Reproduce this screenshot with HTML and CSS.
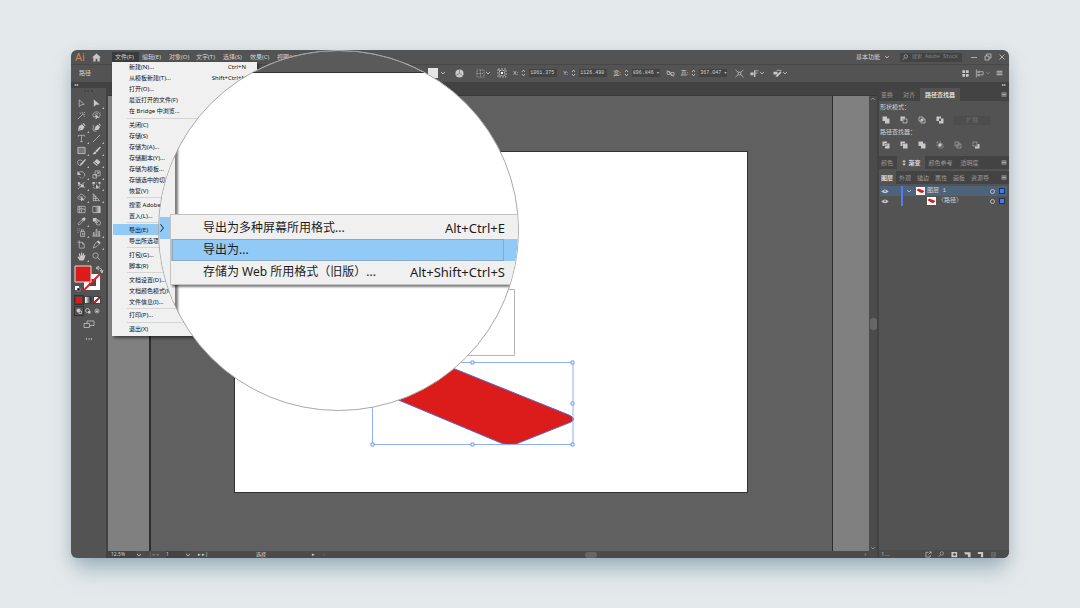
FILE: index.html
```html
<!DOCTYPE html>
<html lang="zh-CN">
<head>
<meta charset="utf-8">
<title>导出为</title>
<link rel="stylesheet" href="styles.css">
</head>
<body>
<svg class="defs" aria-hidden="true">
  <symbol id="chev" viewBox="0 0 10 10"><path class="ln" d="M2 3.5l3 3 3-3"/></symbol>
  <symbol id="step" viewBox="0 0 10 16"><path class="ln" d="M2 6l3-4 3 4M2 10l3 4 3-4"/></symbol>
  <symbol id="lines" viewBox="0 0 12 10"><path class="ln" d="M1 2h10M1 5h10M1 8h10"/></symbol>
  <symbol id="eye" viewBox="0 0 20 12"><path class="fl" d="M1 6q9-10 18 0q-9 9-18 0z"/><circle cx="10" cy="5" r="2" fill="#444"/></symbol>
  <symbol id="find" viewBox="0 0 20 20"><circle class="ln" cx="11" cy="7" r="5"/><path class="ln" d="M7 11l-5 6"/></symbol>
  <symbol id="art" viewBox="0 0 18 16"><path fill="#fff" d="M0 0h18v16H0z"/><path fill="#dc1c1a" d="M1 6l4-3 12 5-4 4-5-1z"/></symbol>
</svg>
<main class="window">
  <header class="menubar">
    <span class="logo">Ai</span>
    <button class="home" aria-label="主页"><svg viewBox="0 0 20 18"><path class="fl" d="M10 0L0 9h3v9h5v-6h4v6h5V9h3z"/></svg></button>
    <nav class="menus">
      <button class="open">文件(F)</button><button>编辑(E)</button><button>对象(O)</button><button>文字(T)</button><button>选择(S)</button><button>效果(C)</button><button>视图(V)</button>
    </nav>
    <button class="workspace">基本功能 <svg><use href="#chev"/></svg></button>
    <label class="search"><svg><use href="#find"/></svg><input aria-label="搜索" placeholder="搜索 Adobe Stock"></label>
    <div class="winbtns">
      <button aria-label="最小化"><svg viewBox="0 0 16 16"><path class="ln" d="M2 9h12"/></svg></button>
      <button aria-label="还原"><svg viewBox="0 0 16 16"><path class="ln" d="M2 6h8v8H2zM5 6V2h9v8h-4"/></svg></button>
      <button aria-label="关闭"><svg viewBox="0 0 16 16"><path class="ln" d="M3 3l10 10M13 3L3 13"/></svg></button>
    </div>
  </header>

  <section class="control">
    <span class="kind">路径</span>
    <button class="fill" aria-label="填色"></button><svg class="s"><use href="#chev"/></svg>
    <svg class="m globe" viewBox="0 0 20 20"><circle class="fl" cx="10" cy="10" r="9"/><path d="M10 1v9l7 5M10 10l-8 4" stroke="#888" stroke-width="2" fill="none"/></svg>
    <svg class="m" viewBox="0 0 20 20"><path class="ln" stroke-dasharray="2 2" d="M2 2h16v16H2zM2 10h16M10 2v16"/></svg><svg class="s near"><use href="#chev"/></svg>
    <svg class="m ref" viewBox="0 0 20 20"><path class="ln" stroke-dasharray="4 2" d="M2 2h16v16H2zM5 5h10v10H5z"/><path fill="#fff" d="M8 8h4v4H8z"/></svg>
    <label class="num">X:<svg><use href="#step"/></svg><input value="1061.375"></label>
    <label class="num">Y:<svg><use href="#step"/></svg><input value="1126.490"></label>
    <label class="num">宽:<svg><use href="#step"/></svg><input value="896.846 ▸"></label>
    <svg class="m" viewBox="0 0 20 20"><path class="ln" d="M2 6h7v6H3zM11 8h7v6h-7zM3 3l14 14"/></svg>
    <label class="num">高:<svg><use href="#step"/></svg><input value="367.047 ▸"></label>
    <svg class="m gap" viewBox="0 0 20 20"><path class="ln" d="M1 2l6 5M19 2l-6 5M1 18l6-5M19 18l-6-5M7 7h6v6H7z"/></svg>
    <svg class="m" viewBox="0 0 20 20"><path class="fl" d="M1 8h7v6H1zM9 3h3v15H9z"/><path class="ln" d="M12 4h7M12 9h5"/></svg><svg class="s near"><use href="#chev"/></svg>
    <svg class="m gap" viewBox="0 0 20 20"><path class="fl" d="M1 6h9v6H1zM5 17L16 5l3 3-9 9z"/><path class="ln" d="M8 3h11"/></svg><svg class="s near"><use href="#chev"/></svg>
    <div class="right">
      <svg class="m" viewBox="0 0 20 20"><path class="fl" d="M3 3h6v6H3zM11 3h6v6h-6zM3 11h6v6H3zM11 11h6v6h-6z"/></svg>
      <svg class="m" viewBox="0 0 20 20"><path class="ln" d="M3 1v18M6 5h4v3H6zM6 12h4v3H6zM11 6h7v7h-7"/></svg>
      <svg class="s dim"><use href="#chev"/></svg>
      <svg class="list"><use href="#lines"/></svg>
    </div>
  </section>

  <div class="main">
    <aside class="tools">
      <div class="collapse">◂◂</div>
      <div class="grip"></div>
      <div class="toolgrid">
        <button aria-label="选择"><svg viewBox="0 0 20 20"><path class="ln" d="M5 2v15l4-4 7-1z"/></svg></button>
        <button class="more" aria-label="直接选择"><svg viewBox="0 0 20 20"><path class="fl" d="M4 1v17l5-5 8-1z"/></svg></button>
        <button aria-label="魔棒"><svg viewBox="0 0 20 20"><path class="ln" d="M2 18L13 7M12 2v4M18 8h-4M6 4l3 2M17 13l-3-3M18 2l-3 3"/></svg></button>
        <button aria-label="套索"><svg viewBox="0 0 20 20"><path class="ln" d="M5 15C-1 9 3 2 10 2s11 6 6 11M6 8q4-4 8-1M5 12h4"/><path class="fl" d="M8 7v12l4-4h5z"/></svg></button>
        <button class="more" aria-label="钢笔"><svg viewBox="0 0 20 20"><path class="fl" d="M2 18l2-11 7-4 6 6-4 6zM12 1l2-1 5 5-1 2z"/><path d="M3 17l6-6" stroke="#555"/></svg></button>
        <button aria-label="曲率"><svg viewBox="0 0 20 20"><path class="fl" d="M5 16l3-9 5-3 5 5-4 6zM14 2l2-1 4 4-2 1z"/><path class="ln" d="M2 4q3 5 0 9q-1 6 8 5"/></svg></button>
        <button class="more" aria-label="文字"><svg viewBox="0 0 20 20"><path class="ln" d="M3 6V3h14v3M10 3v14M7 17h6"/></svg></button>
        <button class="more" aria-label="直线段"><svg viewBox="0 0 20 20"><path class="ln" d="M2 18L18 2"/></svg></button>
        <button class="more" aria-label="矩形"><svg viewBox="0 0 20 20"><path fill="#777" stroke="#bbb" stroke-width="2" d="M2 3h16v14H2z"/></svg></button>
        <button class="more" aria-label="画笔"><svg viewBox="0 0 20 20"><path class="fl" d="M18 1l2 2-9 11-4-3zM6 12l4 3c-2 4-6 4-9 3 3-1 2-4 5-6z"/></svg></button>
        <button class="more" aria-label="斑点画笔"><svg viewBox="0 0 20 20"><path class="ln" d="M12 7C6 1-1 7 2 13s9 4 8-1"/><path class="fl" d="M18 2l2 2-9 11-5 2 2-5z"/></svg></button>
        <button class="more" aria-label="橡皮擦"><svg viewBox="0 0 20 20"><path class="fl" d="M11 2l8 7-8 9-9-8z"/><path d="M5 8l8 7" stroke="#555" stroke-width="2"/></svg></button>
        <button class="more" aria-label="旋转"><svg viewBox="0 0 20 20"><path class="ln" d="M3 7c6-8 17-1 14 7"/><path class="ln" stroke-dasharray="2 2" d="M16 15q-6 6-12-1"/><path class="fl" d="M1 2v9h8z"/></svg></button>
        <button class="more" aria-label="比例缩放"><svg viewBox="0 0 20 20"><path class="ln" d="M7 2h11v11H7zM2 10h8v8H2zM9 11l6-6M11 5h4v4"/></svg></button>
        <button class="more" aria-label="宽度"><svg viewBox="0 0 20 20"><path class="ln" d="M2 4q7 9 15-2M2 18q7-10 16-3M2 9l9 4"/><path class="fl" d="M2 3h5v5H2zM9 8h6v6H9z"/></svg></button>
        <button class="more" aria-label="自由变换"><svg viewBox="0 0 20 20"><path class="ln" stroke-dasharray="3 2" d="M3 4h14v12H3z"/><path class="fl" d="M1 2h5v5H1zM9 7v11l3-3h5zM15 2h4v4h-4z"/></svg></button>
        <button class="more" aria-label="形状生成器"><svg viewBox="0 0 20 20"><path class="ln" d="M10 14c-9 2-11-7-4-8 1-6 9-3 9 1 5 0 4 5 1 6M5 9h8"/><path class="fl" d="M9 8v11l3-3h5z"/></svg></button>
        <button class="more" aria-label="透视网格"><svg viewBox="0 0 20 20"><path class="ln" d="M3 1v17M3 2l14 15H3M3 7h5M3 12h9M8 7v10"/></svg></button>
        <button aria-label="网格"><svg viewBox="0 0 20 20"><path class="ln" d="M2 3h16v14H2zM2 10q8-4 16 0M9 3q4 7 0 14M5 3q3 7 0 14"/></svg></button>
        <button aria-label="渐变"><svg viewBox="0 0 20 20"><path fill="url(#grad)" stroke="#bbb" stroke-width="2" d="M2 3h16v14H2z"/><linearGradient id="grad"><stop stop-color="#222"/><stop offset="1" stop-color="#ddd"/></linearGradient></svg></button>
        <button class="more" aria-label="吸管"><svg viewBox="0 0 20 20"><path class="ln" d="M3 17v-3l8-8 3 3-8 8z"/><path class="fl" d="M10 4l6 6 1-3 2-2q1-5-4-4l-2 2z"/></svg></button>
        <button aria-label="混合"><svg viewBox="0 0 20 20"><path class="fl" d="M2 2h8v8H2z"/><circle class="ln" cx="14" cy="13" r="5"/><circle class="ln" cx="10" cy="9" r="4"/></svg></button>
        <button class="more" aria-label="符号喷枪"><svg viewBox="0 0 20 20"><path class="ln" d="M8 8h9v11H8zM10 8V4h4v4M11 12h3v3h-3"/><path class="ln" stroke-dasharray="2 2" d="M1 2h8M1 6h5M1 10h4"/></svg></button>
        <button class="more" aria-label="柱形图"><svg viewBox="0 0 20 20"><path class="ln" d="M1 18h18M3 18v-8h2v8M9 18V3h2v15M15 18V7h2v11"/></svg></button>
        <button aria-label="画板"><svg viewBox="0 0 20 20"><path class="ln" d="M5 1v16M1 5h11l4 4v9H5M12 5v4h4"/></svg></button>
        <button class="more" aria-label="切片"><svg viewBox="0 0 20 20"><path class="ln" d="M3 18L6 9l7-7 5 5-7 7z"/><path class="fl" d="M11 4l5 5 3-3-5-5z"/></svg></button>
        <button class="more" aria-label="抓手"><svg viewBox="0 0 20 20"><path class="fl" d="M6 19L1 11l2-1 3 3-2-9 2-1 3 7V1h2l1 8 2-7h2l-1 8 2-4 2 1-3 9-2 3z"/></svg></button>
        <button aria-label="缩放"><svg viewBox="0 0 20 20"><circle class="ln" cx="8" cy="8" r="6"/><path class="ln" d="M12 12l6 6"/></svg></button>
      </div>
      <svg class="swatches" viewBox="0 0 35 28">
        <path d="M13 9h16v16H13z" fill="#fff"/><path d="M18 14h7v7h-7z" fill="#4b4b4b"/><path d="M13 25L29 9" stroke="#e02020" stroke-width="2"/>
        <path d="M4 1h16v16H4z" fill="#dc1c1a" stroke="#ddd"/>
        <path class="ln thin" d="M26 3q5-1 5 4M28 1l-3 2 3 2M29 5l2 3 1-3"/>
        <path d="M4 21h4v4H4z" fill="#fff"/><path d="M6 23h3v3H6z" fill="#111" stroke="#ddd" stroke-width=".5"/>
      </svg>
      <div class="modes"><i class="red on"></i><i class="grad"></i><i class="none"></i></div>
      <div class="modes draw">
        <svg class="on" viewBox="0 0 16 16"><circle class="fl" cx="7" cy="7" r="4"/><path class="ln" d="M8 8h5v5H8z"/></svg>
        <svg viewBox="0 0 16 16"><circle class="ln" cx="7" cy="7" r="4"/><path class="fl" d="M8 8h5v5H8z"/></svg>
        <svg viewBox="0 0 16 16"><circle class="ln" cx="8" cy="8" r="4"/><path class="fl" d="M6 7h4v3H6z"/></svg>
      </div>
      <svg class="screen" viewBox="0 0 24 18"><path class="ln" d="M8 2h14v9H8z"/><path class="ln front" d="M2 7h11v8H2z"/></svg>
      <svg class="dots" viewBox="0 0 16 4"><circle class="fl" cx="3" cy="2" r="1.500"/><circle class="fl" cx="8" cy="2" r="1.500"/><circle class="fl" cx="13" cy="2" r="1.500"/></svg>
    </aside>

    <section class="work">
      <div class="tabstrip"></div>
      <div class="canvas">
        <div class="artboard">
          <svg viewBox="0 0 512 340">
            <path d="M160 137.500h119.500V203.500H160z" fill="#fff" stroke="#b5b5b5"/>
            <path d="M142 239L210 213L334 263Q342 267 336 270L281 292Q274 294 266 291Z" fill="#dc1c1a" stroke="#5864d8"/>
            <path d="M137.500 210.500h200.500v82H137.500z" fill="none" stroke="#8fb0f5"/>
            <path d="M136 209h3v3h-3zM236 209h3v3h-3zM336 209h3v3h-3zM336 250h3v3h-3zM136 291h3v3h-3zM236 291h3v3h-3zM336 291h3v3h-3z" fill="#fff" stroke="#7598ee"/>
          </svg>
        </div>
      </div>
      <div class="vscroll"><svg><use href="#chev"/></svg><i></i><svg><use href="#chev"/></svg></div>
      <footer class="status">
        <span class="zoom">12.5%</span><svg><use href="#chev"/></svg><span class="dim">|◂ ◂</span><span class="page">1</span><svg><use href="#chev"/></svg><span class="nav">▸ ▸|</span><span class="mode">选择</span><span class="play">▸</span><span class="dim">‹</span><i class="thumb"></i><span class="end">›</span>
      </footer>
    </section>

    <aside class="panels">
      <div class="collapse">▸▸</div>
      <div class="tabs first"><button>变换</button><button>对齐</button><button class="on">路径查找器</button><svg><use href="#lines"/></svg></div>
      <div class="finder">
        <p>形状模式：</p>
        <div class="ops">
          <svg viewBox="0 0 16 16"><path class="fl" d="M1 1h9v4h5v10H6v-5H1z"/></svg>
          <svg viewBox="0 0 16 16"><path class="fl" d="M1 1h9v4H5v5H1z"/><path class="ln" d="M6 6h8v8H6z"/></svg>
          <svg viewBox="0 0 16 16"><path class="ln" d="M2 2h8v8H2zM6 6h8v8H6z"/><path class="fl" d="M6 6h4v4H6z"/></svg>
          <svg viewBox="0 0 16 16"><path class="fl" fill-rule="evenodd" d="M1 1h9v4h5v10H6v-5H1zM6 5h4v5H6z"/></svg>
          <button class="expand" disabled>扩展</button>
        </div>
        <p>路径查找器：</p>
        <div class="ops">
          <svg viewBox="0 0 16 16"><path class="fl" d="M1 1h9v4h5v10H6v-5H1z"/><path d="M5 10V5h5v5z" fill="none" stroke="#555"/></svg>
          <svg viewBox="0 0 16 16"><path class="fl" d="M1 1h9v4h5v10H6v-5H1z"/><path d="M5 10V5h5" fill="none" stroke="#555"/></svg>
          <svg viewBox="0 0 16 16"><path class="fl" d="M1 1h9v4h5v10H6v-5H1z"/></svg>
          <svg viewBox="0 0 16 16"><path class="ln thin" stroke-dasharray="2 1" d="M2 2h8v8H2zM6 6h8v8H6z"/><path class="fl" d="M5 5h6v6H5z"/></svg>
          <svg viewBox="0 0 16 16"><path class="ln thin" d="M2 2h8v8H2zM6 6h8v8H6z"/></svg>
          <svg viewBox="0 0 16 16"><path class="fl" d="M11 6h4v9H6v-4h5z"/><path class="ln thin" d="M2 2h8v8H2z"/></svg>
        </div>
      </div>
      <div class="tabs second"><button>颜色</button><button class="on">↕ 渐变</button><button>颜色参考</button><button>透明度</button><svg><use href="#lines"/></svg></div>
      <div class="tabs third"><button class="on">图层</button><button>外观</button><button>描边</button><button>属性</button><button>画板</button><button>资源导</button><svg><use href="#lines"/></svg></div>
      <div class="layers">
        <div class="layer sel"><svg class="eye"><use href="#eye"/></svg><i class="bar"></i><svg class="chev"><use href="#chev"/></svg><svg class="pic"><use href="#art"/></svg><span>图层 1</span><i class="ring"></i><i class="blue"></i></div>
        <div class="layer"><svg class="eye"><use href="#eye"/></svg><i class="bar"></i><svg class="pic sub"><use href="#art"/></svg><span>〈路径〉</span><i class="ring"></i><i class="blue"></i></div>
      </div>
      <footer class="panelfoot">
        <span>1...</span>
        <svg viewBox="0 0 16 16"><path class="ln" d="M8 3H2v11h10V9M8 8l6-6M10 2h4v4"/></svg>
        <svg><use href="#find"/></svg>
        <svg viewBox="0 0 16 16"><path class="fl" d="M1 2h13v12H1z"/><circle cx="8" cy="8" r="3" fill="#444"/></svg>
        <svg viewBox="0 0 16 16"><path class="fl" d="M0 3h15v11H9V8H3z"/></svg>
        <svg viewBox="0 0 16 16"><path class="fl" d="M2 2h12v12H9V7H2z"/></svg>
        <svg class="dim" viewBox="0 0 16 16"><path class="ln" d="M2 4h12M4 4v10h8V4M7 6v6M10 6v6"/></svg>
      </footer>
    </aside>
  </div>

  <div class="filemenu" role="menu">
    <button>新建(N)...<kbd>Ctrl+N</kbd></button><button>从模板新建(T)...<kbd>Shift+Ctrl+N</kbd></button><button>打开(O)...</button><button>最近打开的文件(F)</button><button>在 Bridge 中浏览...</button><hr>
    <button>关闭(C)</button><button>存储(S)</button><button>存储为(A)...</button><button>存储副本(Y)...</button><button>存储为模板...</button><button>存储选中的切片...</button><button>恢复(V)</button><hr>
    <button>搜索 Adobe Stock...</button><button>置入(L)...</button><hr>
    <button class="hot">导出(E)</button><button>导出所选项目...</button><hr>
    <button>打包(G)...</button><button>脚本(R)</button><hr>
    <button>文档设置(D)...</button><button>文档颜色模式(M)</button><button>文件信息(I)...</button><hr>
    <button>打印(P)...</button><hr>
    <button>退出(X)</button>
  </div>

  <div class="lens">
    <div class="lenstop"></div>
    <div class="lensmenu"><div class="lenshot"><svg viewBox="0 0 8 12"><path d="M2 1l4 5-4 5" fill="none" stroke="#222" stroke-width="1.300"/></svg></div></div>
    <div class="submenu" role="menu">
      <button>导出为多种屏幕所用格式...<kbd>Alt+Ctrl+E</kbd></button>
      <button class="hot">导出为...</button>
      <button>存储为 Web 所用格式（旧版）...<kbd>Alt+Shift+Ctrl+S</kbd></button>
    </div>
  </div>
</main>
</body>
</html>
```

FILE: styles.css
```css
* { box-sizing: border-box; }
html { height: 100%; }
body {
  margin: 0;
  height: 100%;
  min-height: 420px;
  padding: 50px 71px;
  background: #e4e9ec;
  font: 6px/10px "Noto Sans", "Noto Sans CJK SC", sans-serif;
  color: #d2d2d2;
}
button, input, kbd { font: inherit; color: inherit; }
button { background: none; border: 0; padding: 0; margin: 0; white-space: nowrap; }
input { border: 0; padding: 0; margin: 0; min-width: 0; }
i, svg { display: block; flex: none; }
p { margin: 0; }
.defs { position: absolute; width: 0; height: 0; }
.ln { fill: none; stroke: #c4c4c4; stroke-width: 1.6; }
.thin { stroke-width: 1; }
.fl { fill: #c8c8c8; }
.dim { opacity: .4; }

.window {
  position: relative;
  height: 100%;
  display: flex;
  flex-direction: column;
  border-radius: 6px;
  background: #535353;
  box-shadow: 0 14px 22px -4px rgba(110, 140, 155, .6), 0 2px 12px rgba(150, 170, 180, .3);
}

/* menu bar */
.menubar { display: flex; align-items: center; height: 15px; padding: 0 3px 0 4px; border-bottom: 1px solid #474747; }
.logo { width: 17px; color: #cf8557; font-size: 11px; line-height: 14px; }
.home { width: 20px; }
.home svg { width: 9px; height: 9px; }
.menus { display: flex; }
.menus button { width: 27px; height: 10px; padding-left: 3px; text-align: left; }
.menus .open { background: #3b3b3b; }
.workspace { display: flex; align-items: center; gap: 4px; margin-left: auto; padding-right: 4px; }
.workspace svg { width: 6px; height: 6px; }
.search { display: flex; align-items: center; gap: 3px; width: 62px; height: 9px; margin: 0 8px 0 6px; padding-left: 2px; background: #434343; }
.search svg { width: 7px; height: 7px; }
.search input { flex: 1; background: none; font: 5px/8px "Liberation Mono", "Noto Sans CJK SC", monospace; }
.search input::placeholder { color: #858585; }
.winbtns { display: flex; gap: 6px; }
.winbtns svg { width: 8px; height: 8px; }

/* control bar */
.control { display: flex; align-items: center; gap: 6px; height: 17px; padding: 0 6px 1px 8px; }
.kind { width: 343px; }
.fill { width: 10px; height: 10px; background: #e4e4e4; }
.control .s { width: 6px; height: 6px; margin-left: -4px; }
.control .near { margin-left: -6px; }
.control .m { width: 9px; height: 9px; }
.control .gap { margin-left: 2px; }
.control .globe { margin: 0 6px 0 3px; }
.control .ref { width: 10px; height: 10px; }
.num { display: flex; align-items: center; gap: 3px; min-width: 43px; justify-content: flex-end; }
.num svg { width: 5px; height: 8px; }
.num input { width: 28px; height: 8px; padding-left: 1px; background: #434343; font: 5px/8px "Liberation Mono", monospace; }
.control .right { display: flex; align-items: center; gap: 5px; margin-left: auto; }
.list { width: 7px; height: 6px; }

/* tool column */
.main { flex: 1; display: flex; min-height: 0; border-radius: 0 0 6px 6px; overflow: hidden; }
.collapse { height: 6px; background: #424242; font-size: 4px; line-height: 5px; }
.tools { width: 35px; flex: none; }
.tools .collapse { padding-left: 3px; }
.grip { height: 3px; margin: 1px 13px 6px; border-bottom: 2px dotted #444; }
.toolgrid { display: grid; grid-template-columns: 15px 15px; grid-auto-rows: 11px; height: 164px; align-content: space-between; margin-left: 3px; }
.toolgrid button { display: grid; place-items: center; position: relative; }
.toolgrid svg { width: 9px; height: 9px; }
.toolgrid .more::after { content: ""; position: absolute; right: 0; bottom: 0; border: 1px solid; border-color: transparent #bbb #bbb transparent; }
.swatches { width: 35px; height: 28px; margin-top: 3px; }
.modes { display: grid; grid-template-columns: repeat(3, 9px); margin: 3px 0 0 4px; }
.modes > * { width: 8px; height: 8px; border: 1px solid #444; background: #ddd; }
.modes .red { background: #dc1c1a; }
.modes .grad { background: linear-gradient(90deg, #fff, #222); }
.modes .none { background: linear-gradient(135deg, #fff 36%, #dc1c1a 36%, #dc1c1a 64%, #fff 64%); }
.modes.draw > * { border: 0; background: none; }
.modes .on { outline: 1px solid #333; }
.screen { width: 12px; height: 9px; margin: 5px 0 0 12px; }
.front { fill: #535353; }
.dots { width: 8px; height: 2px; margin: 9px 0 0 14px; }

/* document area */
.work { flex: 1; display: grid; grid-template: 14px 1fr 7px / 1fr 8px; border-left: 2px solid #424242; min-width: 0; }
.tabstrip { grid-column: 1 / 3; background: #424242; border-bottom: 1px solid #383838; }
.canvas { position: relative; overflow: hidden; background: #606060; border: solid #808080; border-width: 0 36px 0 41px; }
.canvas::before { content: ""; position: absolute; inset: 0; border: solid #2e2e2e; border-width: 0 1px 0 2px; }
.artboard { position: absolute; left: 86px; top: 56px; width: 512px; height: 340px; background: #fff; outline: 1px solid #333; }
.artboard svg { width: 512px; height: 340px; }
.vscroll { display: flex; flex-direction: column; align-items: center; justify-content: space-between; background: #4b4b4b; }
.vscroll svg { width: 6px; height: 6px; opacity: .6; }
.vscroll svg:first-child { transform: rotate(180deg); }
.vscroll i { width: 7px; height: 12px; border-radius: 3px; background: #666; }
.status { grid-column: 1 / 3; display: flex; align-items: center; background: #4b4b4b; font-size: 5px; line-height: 7px; overflow: hidden; white-space: nowrap; }
.status svg { width: 6px; height: 6px; margin-right: 7px; }
.status .zoom { width: 28px; padding-left: 3px; background: #434343; }
.status .page { width: 19px; margin-left: 7px; background: #434343; }
.status .nav { width: 58px; }
.status .mode { width: 56px; }
.status .play { width: 11px; }
.status .thumb { width: 12px; height: 6px; margin-left: 260px; border-radius: 3px; background: #666; }
.status .end { margin-left: auto; padding-right: 11px; }

/* panels */
.panels { width: 132px; flex: none; display: flex; flex-direction: column; border-left: 2px solid #424242; }
.panels .collapse { padding-right: 3px; text-align: right; }
.tabs { display: flex; background: #434343; height: 13px; color: #999; }
.tabs .on { background: #535353; color: #eee; font-weight: 500; }
.tabs svg { width: 6px; height: 5px; margin: 4px 2px 0 auto; }
.first button { padding: 0 5px; }
.first button:first-child, .second button:first-child { padding-left: 2px; }
.second { margin-top: 4px; }
.second button { padding: 0 4px; }
.third { margin-top: 2px; }
.third button { padding: 0 3px; }
.third button:first-child { padding-left: 2px; }
.finder { padding: 1px 1px 0; }
.finder p { line-height: 11px; }
.ops { display: flex; align-items: center; gap: 10px; height: 14px; padding-left: 2px; }
.ops svg { width: 8px; height: 8px; }
.expand { width: 36px; height: 9px; line-height: 9px; background: #4d4d4d; color: #6e6e6e; }
.layers { flex: 1; margin: 2px 2px 0 1px; }
.layer { display: flex; align-items: center; height: 10px; padding: 0 3px 0 1px; font-family: "Liberation Mono", "Noto Sans CJK SC", monospace; }
.layer.sel { background: #4c637b; }
.eye { width: 8px; height: 5px; }
.bar { width: 2px; height: 10px; margin-left: 12px; background: #4f7cf0; }
.layer .chev { width: 6px; height: 6px; margin-left: 3px; }
.layer .pic { width: 9px; height: 8px; margin: 0 2px 0 4px; }
.layer .sub { margin-left: 24px; }
.ring { width: 5px; height: 5px; margin: 0 5px 0 auto; border: 1px solid #bbb; border-radius: 50%; }
.blue { width: 4px; height: 4px; background: #4477ff; outline: 1px solid #234; }
.panelfoot { display: flex; align-items: center; gap: 6px; height: 8px; padding: 0 12px 0 2px; color: #9bb0c8; background: #4b4b4b; }
.panelfoot span { margin-right: auto; }
.panelfoot svg { width: 7px; height: 7px; }

/* opened file menu */
.filemenu {
  position: absolute; left: 41px; top: 12px; width: 145px; height: 274px;
  display: flex; flex-direction: column; padding: 0 1px 1px;
  background: #f0f0f0; color: #111; box-shadow: 2px 2px 3px rgba(0, 0, 0, .5);
}
.filemenu button { flex: 1; min-height: 0; display: flex; align-items: center; justify-content: space-between; padding: 0 10px 0 16px; }
.filemenu hr { width: auto; height: 1px; margin: 1px 0 1px 14px; border: 0; background: #d5d5d5; }
.filemenu .hot { background: #91c9f7; }

/* magnifier */
.lens {
  position: absolute; left: 87px; top: 0; width: 361px; height: 361px;
  border: 1px solid #a8a8a8; border-radius: 50%; overflow: hidden; background: #fff; color: #1c1c1c;
}
.lenstop { height: 22px; background: #5a5a5a; border-bottom: 1px solid #333; }
.lensmenu { width: 16px; height: 265px; padding-top: 144px; background: #f0f0f0; box-shadow: 2px 1px 2px 1px rgba(0, 0, 0, .5); }
.lenshot { display: flex; align-items: center; height: 22px; background: #91c9f7; }
.lenshot svg { width: 6px; height: 10px; }
.submenu {
  position: absolute; left: 11px; top: 163px; width: 360px; height: 71px;
  display: flex; flex-direction: column; padding: 2px 0 1px;
  border: 1px solid #c4c4c4; background: #f0f0f0; box-shadow: 2px 2px 2px rgba(0, 0, 0, .5);
  font-size: 12px; line-height: 20px;
}
.submenu button { flex: 1; display: flex; align-items: center; justify-content: space-between; padding: 0 24px 0 32px; position: relative; }
.submenu kbd { font-size: 13px; }
.submenu .hot { background: #91c9f7; }
.submenu .hot::after { content: ""; position: absolute; inset: 0 25px 0 1px; border: 1px solid #8aa9c2; }
```
